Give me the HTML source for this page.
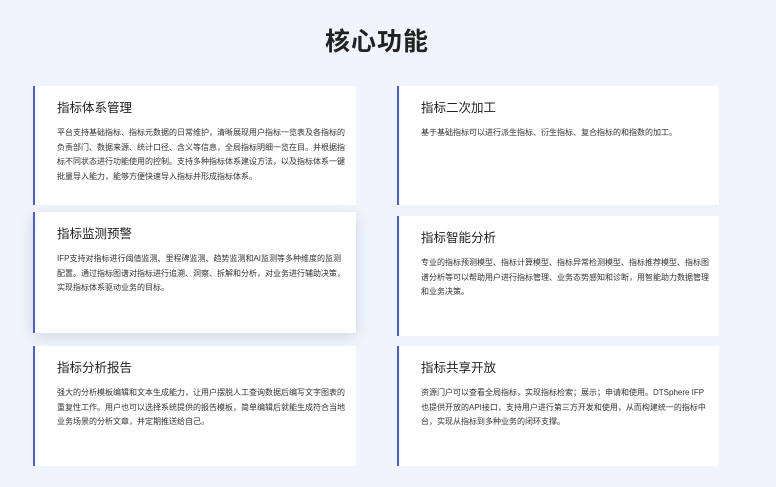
<!DOCTYPE html>
<html><head><meta charset="utf-8"><style>
*{margin:0;padding:0;box-sizing:border-box}
body{width:776px;height:487px;background:#f0f4fc;font-family:"Liberation Sans","Noto Sans CJK SC",sans-serif;position:relative;overflow:hidden}
h1{position:absolute;top:22px;left:-11px;width:776px;text-align:center;font-size:25px;font-weight:bold;color:#222;letter-spacing:1px}
.c{position:absolute;background:#fff;border-left:2px solid #4a5cf0;padding:12px 10px 0 22px}
.c h2{font-size:12.5px;font-weight:normal;color:#222;height:20px;line-height:20px}
.c p{margin-top:8px;font-size:8px;line-height:14.5px;color:#333}
.s{box-shadow:0 4px 14px rgba(40,60,120,0.15)}
</style></head><body>
<h1>核心功能</h1>
<div class="c" style="left:33px;top:86px;width:323px;height:119px"><h2>指标体系管理</h2><p>平台支持基础指标、指标元数据的日常维护，清晰展现用户指标一览表及各指标的负责部门、数据来源、统计口径、含义等信息，全局指标明细一览在目。并根据指标不同状态进行功能使用的控制。支持多种指标体系建设方法，以及指标体系一键批量导入能力，能够方便快速导入指标并形成指标体系。</p></div>
<div class="c s" style="left:33px;top:212px;width:323px;height:121px"><h2>指标监测预警</h2><p>IFP支持对指标进行阈值监测、里程碑监测、趋势监测和AI监测等多种维度的监测配置。通过指标图谱对指标进行追溯、洞察、拆解和分析，对业务进行辅助决策，实现指标体系驱动业务的目标。</p></div>
<div class="c" style="left:33px;top:346px;width:323px;height:120px"><h2>指标分析报告</h2><p>强大的分析模板编辑和文本生成能力，让用户摆脱人工查询数据后编写文字图表的重复性工作。用户也可以选择系统提供的报告模板，简单编辑后就能生成符合当地业务场景的分析文章，并定期推送给自己。</p></div>
<div class="c" style="left:397px;top:86px;width:322px;height:119px"><h2>指标二次加工</h2><p>基于基础指标可以进行派生指标、衍生指标、复合指标的和指数的加工。</p></div>
<div class="c" style="left:397px;top:216px;width:322px;height:120px"><h2>指标智能分析</h2><p>专业的指标预测模型、指标计算模型、指标异常检测模型、指标推荐模型、指标图谱分析等可以帮助用户进行指标管理、业务态势感知和诊断，用智能助力数据管理和业务决策。</p></div>
<div class="c" style="left:397px;top:346px;width:322px;height:120px"><h2>指标共享开放</h2><p>资源门户可以查看全局指标，实现指标检索；展示；申请和使用。DTSphere IFP也提供开放的API接口，支持用户进行第三方开发和使用，从而构建统一的指标中台，实现从指标到多种业务的闭环支撑。</p></div>
</body></html>
